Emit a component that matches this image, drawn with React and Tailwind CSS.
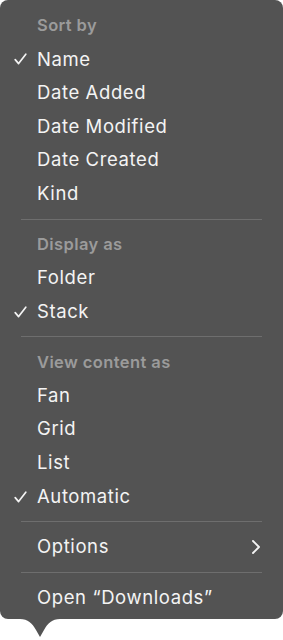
import React from 'react'

const sections = [
  { title: 'Sort by', items: [['Name', true], ['Date Added'], ['Date Modified'], ['Date Created'], ['Kind']] },
  { title: 'Display as', items: [['Folder'], ['Stack', true]] },
  { title: 'View content as', items: [['Fan'], ['Grid'], ['List'], ['Automatic', true]] },
]

function Check() {
  return (
    <svg width="13" height="12" viewBox="0 0 13 12" className="absolute left-[14px] top-1/2 -translate-y-1/2">
      <path d="M1.2 6.6 L4.6 10.6 L11.8 1.2" fill="none" stroke="#f4f4f4" strokeWidth="1.7" strokeLinecap="round" strokeLinejoin="round" />
    </svg>
  )
}

function Row({ label, checked, children }) {
  return (
    <div className="relative flex items-center h-[33.6px] pl-[37px] pr-[22px] text-[18.5px] tracking-[0.6px] text-[#f4f4f4]">
      {checked && <Check />}
      <span className="flex-1">{label}</span>
      {children}
    </div>
  )
}

function Sep() {
  return <div className="mx-[21px] my-[8px] h-px bg-[#6e6e6e]" />
}

export default function App() {
  return (
    <div className="w-[283px] h-[640px] bg-white" style={{ fontFamily: 'Inter, "Noto Sans", sans-serif' }}>
      <div className="relative bg-[#535353] rounded-[8px] pt-[9px] pb-[4px]">
        {sections.map((s, i) => (
          <div key={s.title}>
            {i > 0 && <Sep />}
            <div className="flex items-center h-[33.6px] pl-[37px] text-[16.5px] tracking-[0.4px] font-semibold text-[#9b9b9b]">{s.title}</div>
            {s.items.map(([label, checked]) => (
              <Row key={label} label={label} checked={checked} />
            ))}
          </div>
        ))}
        <Sep />
        <Row label="Options">
          <svg width="10" height="16" viewBox="0 0 10 16">
            <path d="M2 2 L8 8 L2 14" fill="none" stroke="#f4f4f4" strokeWidth="1.9" strokeLinecap="round" strokeLinejoin="round" />
          </svg>
        </Row>
        <Sep />
        <Row label="Open “Downloads”" />
        <svg width="40" height="20" viewBox="0 0 40 20" className="absolute left-[20px] top-full">
          <path d="M0 0 C8 0 12 4 16 11 L20 18 L24 11 C28 4 32 0 40 0 Z" fill="#535353" />
        </svg>
      </div>
    </div>
  )
}
